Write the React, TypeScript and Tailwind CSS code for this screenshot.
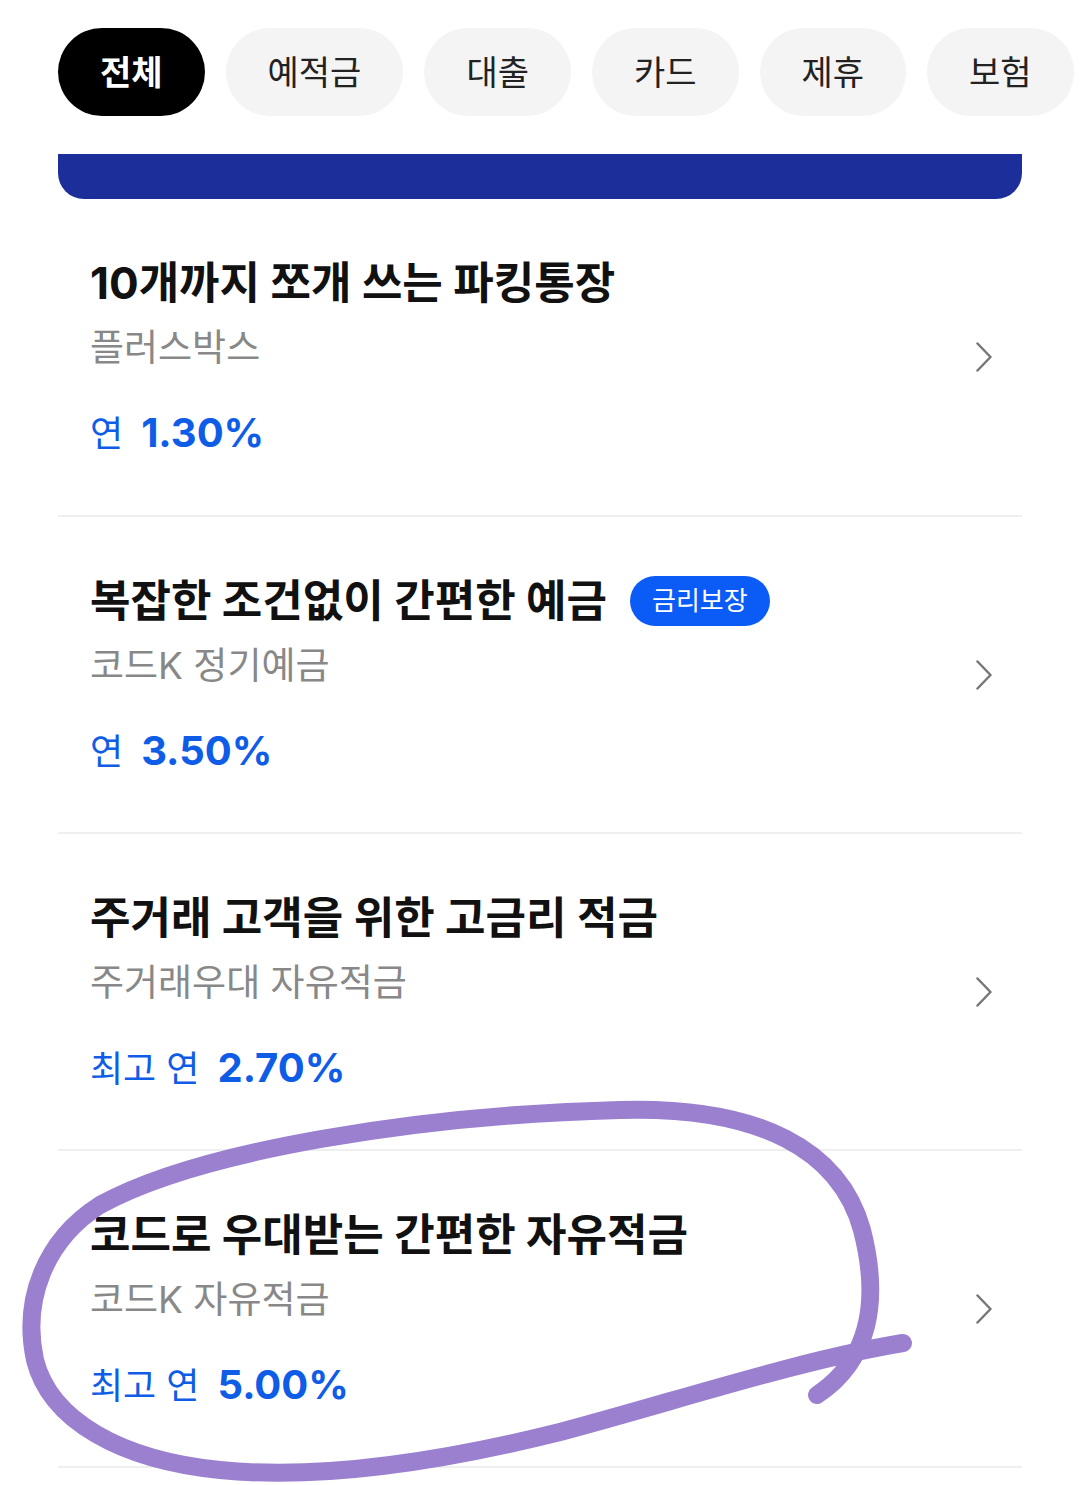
interface Product {
  title: string
  name: string
  prefix: string
  rate: string
  badge?: string
}

const tabs = ['전체', '예적금', '대출', '카드', '제휴', '보험']

const products: Product[] = [
  { title: '10개까지 쪼개 쓰는 파킹통장', name: '플러스박스', prefix: '연', rate: '1.30%' },
  { title: '복잡한 조건없이 간편한 예금', name: '코드K 정기예금', prefix: '연', rate: '3.50%', badge: '금리보장' },
  { title: '주거래 고객을 위한 고금리 적금', name: '주거래우대 자유적금', prefix: '최고 연', rate: '2.70%' },
  { title: '코드로 우대받는 간편한 자유적금', name: '코드K 자유적금', prefix: '최고 연', rate: '5.00%' },
]

function Chevron() {
  return (
    <svg width="16" height="30" viewBox="0 0 16 30" className="shrink-0">
      <polyline points="1.5,1.5 14.5,15 1.5,28.5" fill="none" stroke="#777" strokeWidth="2.5" strokeLinecap="round" strokeLinejoin="round" />
    </svg>
  )
}

export default function App() {
  return (
    <div className="relative w-[1080px] h-[1485px] overflow-hidden bg-white font-['Inter','Noto_Sans_CJK_KR',sans-serif]">
      {/* TABS */}
      <div className="flex gap-[21px] pl-[58px] pt-[28px] overflow-hidden">
        {tabs.map((tab, i) => (
          <div
            key={tab}
            className={
              i === 0
                ? 'shrink-0 h-[88px] px-[42px] flex items-center rounded-full bg-black text-white text-[34px] font-bold'
                : 'shrink-0 h-[88px] px-[42px] flex items-center rounded-full bg-[#f4f4f4] text-[#222] text-[34px]'
            }
          >
            {tab}
          </div>
        ))}
      </div>

      {/* BANNER (cut off) */}
      <div className="mx-[58px] mt-[38px] h-[45px] bg-[#1b2e9a] rounded-b-[26px]" />

      {/* LIST */}
      <div className="mx-[58px]">
        {products.map((p, i) => (
          <div
            key={p.title}
            className={
              i === 0
                ? 'flex items-center h-[316px] pl-[32px] pr-[30px]'
                : 'flex items-center h-[317px] pl-[32px] pr-[30px] border-t-2 border-[#efefef]'
            }
          >
            <div className="flex-1 flex flex-col pt-[2px]">
              <div className="flex items-center gap-[23px] h-[52px]">
                <span className="text-[44px] leading-[52px] font-bold text-[#111]">
                  {p.title}
                </span>
                {p.badge && (
                  <span className="h-[50px] px-[22px] flex items-center rounded-full bg-[#0b5cf6] text-white text-[26px]">
                    {p.badge}
                  </span>
                )}
              </div>
              <div className="mt-[16px] text-[37px] leading-[46px] text-[#888]">
                {p.name}
              </div>
              <div className="mt-[37px] flex items-baseline gap-[18px] text-[#0f5de6] leading-[50px]">
                <span className="text-[36px]">{p.prefix}</span>
                <span className="text-[40px] font-bold">{p.rate}</span>
              </div>
            </div>
            <Chevron />
          </div>
        ))}
        <div className="border-t-2 border-[#efefef]" />
      </div>

      {/* hand-drawn annotation */}
      <svg className="absolute inset-0 pointer-events-none" width="1080" height="1485" viewBox="0 0 1080 1485">
        <path
          d="M 903 1343 C 800 1360, 680 1400, 560 1432 C 440 1462, 320 1480, 220 1470 C 120 1460, 50 1420, 35 1360 C 22 1300, 45 1240, 100 1205 C 200 1150, 420 1115, 620 1110 C 760 1106, 840 1150, 862 1230 C 880 1300, 870 1360, 817 1395"
          fill="none"
          stroke="#9b80d0"
          strokeWidth="18"
          strokeLinecap="round"
          strokeLinejoin="round"
        />
      </svg>
    </div>
  )
}
